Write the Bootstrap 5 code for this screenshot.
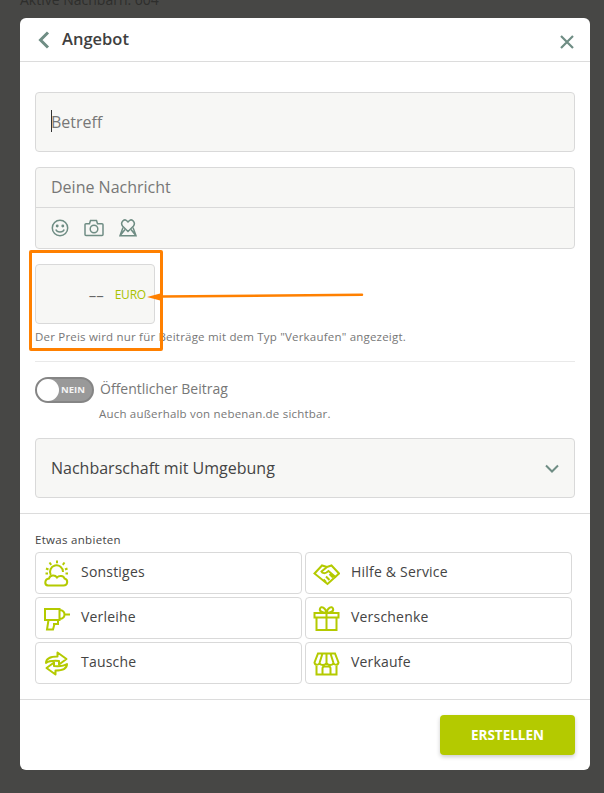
<!DOCTYPE html>
<html lang="de"><head><meta charset="utf-8">
<title>Angebot</title>
<link rel="stylesheet" href="https://cdn.jsdelivr.net/npm/bootstrap@5.3.0/dist/css/bootstrap.min.css">
<style>
html,body{height:793px;overflow:hidden}
body{background:#474745;font-family:"Open Sans",sans-serif;color:#444;position:relative}
.bgline{height:18px;padding-left:20px;font-size:14px;line-height:18px;color:#2e2e2c;margin-top:-9px;margin-bottom:9px;white-space:nowrap}
.sheet{width:570px;height:752px;margin-left:20px;background:#fff;border-radius:6px;overflow:hidden}
.shead{height:43px;border-bottom:1px solid #dcdcdc;padding:0 15px 0 17px;box-sizing:content-box}
.shead h1{font-size:16.500px;font-weight:600;margin:0 0 1px 11px;color:#3f3f3f;line-height:24px;letter-spacing:0}
.sbody{padding:30px 15px 0 15px}
.fieldbox{background:#f7f7f5;border:1px solid #d9d9d9;border-radius:4px;color:#777;font-size:16px;line-height:22px}
.subj{height:60px;padding:0 15px;position:relative;margin-bottom:15px}
.caret{position:absolute;left:15px;top:17px;width:1px;height:22px;background:#333}
.msg{height:82px;margin-bottom:15px}
.msgtop{height:40px;border-bottom:1px solid #d9d9d9;padding:0 15px 2px}
.msgtools{height:40px;padding:0 15px;gap:15px}
.price{width:120px;height:60px;padding:2px 8px 0 0}
.dash{color:#666;font-size:15px;margin-right:11px;letter-spacing:0;line-height:1}
.euro{color:#a9c200;font-size:12px;letter-spacing:-.2px}
.hint{font-size:11.500px;color:#777;line-height:16px;margin-top:5px;letter-spacing:.2px}
.rule1{height:1px;background:#e9e9e9;margin:16px 0 15px}
.swtch{width:59px;height:26px;border-radius:13px;background:#999;border:2px solid #858585;position:relative;flex:none}
.knob{position:absolute;left:0;top:0;width:22px;height:22px;border-radius:50%;background:#fff}
.swtxt{position:absolute;right:7px;top:5px;color:#f4f4f4;font-size:9.500px;font-weight:700;line-height:12px}
.pubt{font-size:14px;color:#777;line-height:24px;margin-left:6px}
.pubs{font-size:11.500px;color:#777;margin:3px 0 16px 64px;line-height:16px;letter-spacing:.2px}
.selbox{height:60px;padding:0 15px;color:#444;margin-bottom:15px}
.rule2{height:1px;background:#dcdcdc}
.offer{padding:17px 15px 15px}
.offer h2{font-size:11.500px;font-weight:500;color:#444;margin:0 0 3px;line-height:18px;letter-spacing:.3px}
.tgrid{display:grid;grid-template-columns:267px 267px;gap:3px}
.tile{height:42px;border:1px solid #d9d9d9;border-radius:4px;padding:0 0 4px 7px;font-size:14px;font-weight:500;color:#444;background:#fff;letter-spacing:.2px;gap:11px}
.tile svg{flex:none;width:27px;height:27px;margin-bottom:-4px;fill:none;stroke:#b4ca00;stroke-width:2}
.foot{padding:15px;display:flex;justify-content:flex-end}
.cta{width:135px;height:40px;background:#b4ca00;border:0;color:#fff;font-weight:700;font-size:13.500px;border-radius:4px;box-shadow:0 2px 4px rgba(0,0,0,.2)}
.cta:hover{background:#b4ca00;color:#fff}
.orangeframe{position:absolute;left:29px;top:250px;width:134px;height:101px;border:3px solid #ff8000;border-radius:2px;pointer-events:none}
.arrowmark{position:absolute;left:140px;top:285px;pointer-events:none}
</style></head>
<body>
<div class="bgline">Aktive Nachbarn: 604</div>
<div class="sheet">
  <div class="shead d-flex align-items-center">
    <svg width="14" height="18" viewBox="0 0 14 18" fill="none" stroke="#6f8d84" stroke-width="3"><path d="M11 1.500 3.500 9l7.500 7.500"/></svg>
    <h1 class="flex-grow-1">Angebot</h1>
    <svg class="mt-1" width="16" height="16" viewBox="0 0 16 16" fill="none" stroke="#6f8d84" stroke-width="2.200"><path d="M2 2l12 12M14 2 2 14"/></svg>
  </div>
  <div class="sbody">
    <div class="fieldbox subj d-flex align-items-center"><span class="caret"></span>Betreff</div>
    <div class="fieldbox msg">
      <div class="msgtop d-flex align-items-center">Deine Nachricht</div>
      <div class="msgtools d-flex align-items-center">
        <svg width="18" height="18" viewBox="0 0 18 18" fill="none" stroke="#6f8d84" stroke-width="1.500"><circle cx="9" cy="9" r="7.700"/><circle cx="6.200" cy="7" r=".7"/><circle cx="11.800" cy="7" r=".7"/><path d="M4.800 10.500c1.200 3.200 7.200 3.200 8.400 0"/></svg>
        <svg width="20" height="18" viewBox="0 0 20 18" fill="none" stroke="#6f8d84" stroke-width="1.500"><path d="M2 4.800h3.500l1-3.300h6l1 3.300H18a1 1 0 0 1 1 1v9.700a1 1 0 0 1-1 1H2a1 1 0 0 1-1-1V5.800a1 1 0 0 1 1-1z"/><circle cx="10" cy="10" r="3.800"/></svg>
        <svg width="18" height="18" viewBox="0 0 18 18" fill="none" stroke="#6f8d84" stroke-width="1.500"><path d="M9 12.500 3.500 7C1 3.500 4.800-.5 7.500 1.500L9 3l1.500-1.500C13.200-.5 17 3.500 14.500 7z"/><path d="M4 8.500 1 16.800h16L14 8.500M1 16.800 6 10.500M17 16.800 12 10.500"/></svg>
      </div>
    </div>
    <div class="fieldbox price d-flex align-items-center justify-content-end"><span class="dash">––</span><span class="euro">EURO</span></div>
    <div class="hint">Der Preis wird nur für Beiträge mit dem Typ "Verkaufen" angezeigt.</div>
    <div class="rule1"></div>
    <div class="d-flex"><div class="swtch"><span class="knob"></span><span class="swtxt">NEIN</span></div><span class="pubt">Öffentlicher Beitrag</span></div>
    <div class="pubs">Auch außerhalb von nebenan.de sichtbar.</div>
    <div class="fieldbox selbox d-flex align-items-center justify-content-between"><span>Nachbarschaft mit Umgebung</span>
      <svg width="14" height="9" viewBox="0 0 14 9" fill="none" stroke="#6f8d84" stroke-width="2"><path d="M1 1.500 7 7.500l6-6"/></svg></div>
  </div>
  <div class="rule2"></div>
  <div class="offer">
    <h2>Etwas anbieten</h2>
    <div class="tgrid">
      <div class="tile d-flex align-items-center">
        <svg viewBox="0 0 27 27"><path d="M5 25.500h15.500c4.500 0 5-6 1-7-.8-3-5.500-3.500-7.500-1-2-3-7-2.500-8 1-4.500.5-5 6.500-1 7z"/><path d="M7.800 15a6.500 6.500 0 1 1 12.200-3"/><path d="M14 .5v2.800M6.500 2.500l1.700 2.300M21.500 2.500l-1.700 2.300M3 8.500l2.500 1M24.500 8.500l-2.500 1M2.500 13.500H5M22.500 13.500H25"/></svg>
        <span>Sonstiges</span></div>
      <div class="tile d-flex align-items-center">
        <svg viewBox="0 0 27 27"><path d="M1.500 13.500 9 5.500l5 1.500 4.500-1.500 7.500 8-11.500 10.500z"/><path d="M14 7 8.500 11.500c1 2 3.500 2 5 1l2-1.500 7.500 6.500M13 22l-2.500-2.500M16.500 20l-3.500-3.500M20 17.500l-3.500-3.500"/></svg>
        <span>Hilfe &amp; Service</span></div>
      <div class="tile d-flex align-items-center">
        <svg viewBox="0 0 27 27"><path d="M2 4h14.500v11H2zM16.500 5c3 .3 5 2 5 4.500s-2 4.200-5 4.500M21.500 9.500H27M5.500 15l-1.500 9.500h6L11.500 19H15v-4M10 19h2"/></svg>
        <span>Verleihe</span></div>
      <div class="tile d-flex align-items-center">
        <svg viewBox="0 0 27 27"><path d="M1.500 8h24v4.500h-24zM3.500 12.500V25h20V12.500M13.500 8v17M13.500 8C9 8 6 6 7 3.500s5.500-1.500 6.500 4.500c1-6 5.500-7 6.500-4.500S18 8 13.500 8z"/></svg>
        <span>Verschenke</span></div>
      <div class="tile d-flex align-items-center">
        <svg viewBox="0 0 27 27" stroke-linejoin="round"><path d="M3 13C3 8 8 6.500 14.500 6.500V2.500L23.500 9 16 14.500V11C10 10.500 6 11 3 13z"/><path d="M24 14C24 19 19 20.500 12.500 20.500V24.500L3.500 18 11 12.500V16C17 16.500 21 16 24 14z"/></svg>
        <span>Tausche</span></div>
      <div class="tile d-flex align-items-center">
        <svg viewBox="0 0 27 27"><path d="M5 3.500h17l3.500 9c-.5 3-4 3-5 .5-1 2.500-5 2.500-7 0-2 2.500-6 2.500-7 0-1 2.500-4.500 2.500-5-.5zM9.500 3.500 6.500 13M17.500 3.500 20.500 13M13.500 3.500V13M3.500 16v8.500h20V16M9.500 24.500V18.500a2 2 0 0 1 2-2h4a2 2 0 0 1 2 2v6"/></svg>
        <span>Verkaufe</span></div>
    </div>
  </div>
  <div class="rule2"></div>
  <div class="foot"><button class="btn cta" type="button">ERSTELLEN</button></div>
</div>
<div class="orangeframe"></div>
<svg class="arrowmark" width="226" height="20" viewBox="0 0 226 20"><path d="M222 9.800 22 11.500" stroke="#ff8000" stroke-width="2.500" stroke-linecap="round"/><path d="M7 12 22 8v8z" fill="#ff8000"/></svg>
</body></html>
